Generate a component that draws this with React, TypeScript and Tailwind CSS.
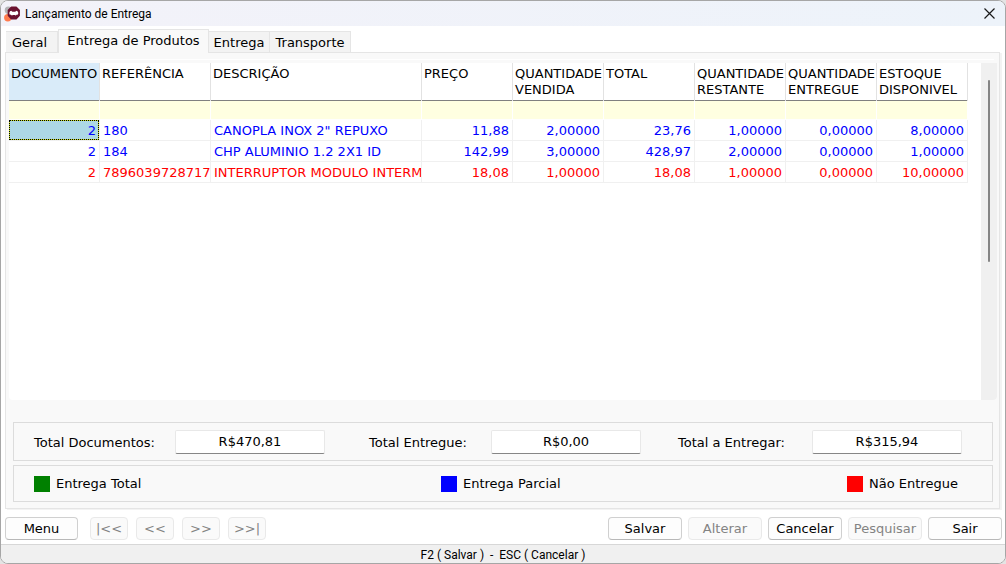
import React, { useState } from 'react';

type Status = 'parcial' | 'nenhum';

interface Produto {
  documento: string;
  referencia: string;
  descricao: string;
  valores: string[];
  status: Status;
}

const TABS = [
  { label: 'Geral', width: 'w-[52px]', align: 'text-left pl-1.5' },
  { label: 'Entrega de Produtos', width: 'w-[151px]', align: 'text-center' },
  { label: 'Entrega', width: 'w-[61px]', align: 'text-center' },
  { label: 'Transporte', width: 'w-[81px]', align: 'text-center' },
];

const COLUMNS = [
  { lines: ['DOCUMENTO'], width: 'w-[91px]' },
  { lines: ['REFERÊNCIA'], width: 'w-[111px]' },
  { lines: ['DESCRIÇÃO'], width: 'w-[211px]' },
  { lines: ['PREÇO'], width: 'w-[91px]' },
  { lines: ['QUANTIDADE', 'VENDIDA'], width: 'w-[91px]' },
  { lines: ['TOTAL'], width: 'w-[91px]' },
  { lines: ['QUANTIDADE', 'RESTANTE'], width: 'w-[91px]' },
  { lines: ['QUANTIDADE', 'ENTREGUE'], width: 'w-[91px]' },
  { lines: ['ESTOQUE', 'DISPONIVEL'], width: 'w-[91px]' },
];

const PRODUTOS: Produto[] = [
  {
    documento: '2',
    referencia: '180',
    descricao: 'CANOPLA INOX 2" REPUXO',
    valores: ['11,88', '2,00000', '23,76', '1,00000', '0,00000', '8,00000'],
    status: 'parcial',
  },
  {
    documento: '2',
    referencia: '184',
    descricao: 'CHP ALUMINIO 1.2 2X1 ID',
    valores: ['142,99', '3,00000', '428,97', '2,00000', '0,00000', '1,00000'],
    status: 'parcial',
  },
  {
    documento: '2',
    referencia: '7896039728717',
    descricao: 'INTERRUPTOR MODULO INTERM',
    valores: ['18,08', '1,00000', '18,08', '1,00000', '0,00000', '10,00000'],
    status: 'nenhum',
  },
];

const TOTAIS = [
  { id: 'total-documentos', label: 'Total Documentos:', value: 'R$470,81', width: 'w-[141px]' },
  { id: 'total-entregue', label: 'Total Entregue:', value: 'R$0,00', width: 'w-[122px]' },
  { id: 'total-entregar', label: 'Total a Entregar:', value: 'R$315,94', width: 'w-[134px]' },
];

const LEGENDA = [
  { label: 'Entrega Total', color: 'bg-[#008000]' },
  { label: 'Entrega Parcial', color: 'bg-[#0000ff]' },
  { label: 'Não Entregue', color: 'bg-[#ff0000]' },
];

const AppIcon: React.FC = () => (
  <svg className="w-4 h-4" viewBox="0 0 16 16" aria-hidden="true">
    <circle cx="4.4" cy="4.2" r="3.7" fill="#b4b4b6" />
    <circle cx="3.8" cy="11.8" r="3.7" fill="#ff7a4d" />
    <path d="M7.4 1.2 H12.2 L15.2 4.2 V9.6 L12.2 12.8 H7.4 L4.4 9.6 V4.2 Z" fill="#6b1230" stroke="#6b1230" strokeWidth="1.4" strokeLinejoin="round" />
    <path d="M5.4 6.4 Q5.8 4.8 7.2 4.8 L8.4 5.8 H11.2 L12.4 4.8 Q13.8 4.8 14.2 6.4 V7.8 Q14.2 8.8 13 8.6 Q12 10 10.6 9 H9 Q7.6 10 6.6 8.6 Q5.4 8.8 5.4 7.8 Z" fill="#fff" />
  </svg>
);

interface FooterButtonProps {
  children: React.ReactNode;
  width: string;
  disabled?: boolean;
}

const FooterButton: React.FC<FooterButtonProps> = ({ children, width, disabled }) => (
  <button
    type="button"
    disabled={disabled}
    className={`${width} h-[23px] shrink-0 rounded border text-center leading-5 whitespace-nowrap ${
      disabled
        ? 'border-[#e9e9e9] bg-[#fafafa] text-[#838383]'
        : 'border-[#d0d0d0] border-b-[#b8b8b8] bg-[#fdfdfd] text-black'
    }`}
  >
    {children}
  </button>
);

const ProductTable: React.FC = () => (
  <table className="self-start table-fixed w-[959px] border-separate border-spacing-0 whitespace-nowrap">
    <thead>
      <tr>
        {COLUMNS.map((column, i) => (
          <th
            key={i}
            scope="col"
            className={`${column.width} p-0 border-r border-[#e2e2e2] text-left font-normal align-top`}
          >
            <div className={`h-[38px] pt-[3px] pl-0.5 border-b border-[#808080] leading-4 ${i === 0 ? 'bg-[#d9ebf9]' : ''}`}>
              {column.lines.map((line) => (
                <div key={line}>{line}</div>
              ))}
            </div>
          </th>
        ))}
      </tr>
      {/* filter row */}
      <tr>
        {COLUMNS.map((_, i) => (
          <td key={i} className="h-[19px] p-0 border-r border-b border-white bg-[#ffffe1]" />
        ))}
      </tr>
    </thead>
    <tbody className="leading-[18px]">
      {PRODUTOS.map((produto, row) => (
        <tr key={row} className={produto.status === 'parcial' ? 'text-[#0000ff]' : 'text-[#ff0000]'}>
          <td className="h-[21px] p-0 border-r border-b border-[#f0f0f0] text-right">
            <div className={`pt-0.5 pr-[3px] ${row === 0 ? 'bg-[#add8e6] outline-1 outline-dotted outline-black -outline-offset-1 ring-1 ring-inset ring-[#c8e020]' : ''}`}>
              {produto.documento}
            </div>
          </td>
          <td className="p-0 pt-0.5 pl-[3px] border-r border-b border-[#f0f0f0]">{produto.referencia}</td>
          <td className="p-0 pt-0.5 pl-[3px] border-r border-b border-[#f0f0f0] overflow-hidden">{produto.descricao}</td>
          {produto.valores.map((valor, i) => (
            <td key={i} className="p-0 pt-0.5 pr-[3px] border-r border-b border-[#f0f0f0] text-right">
              {valor}
            </td>
          ))}
        </tr>
      ))}
    </tbody>
  </table>
);

const App: React.FC = () => {
  const [activeTab, setActiveTab] = useState(1);

  return (
    <div className="min-h-screen flex bg-[#e4e4e4]">
      <div className="flex-1 min-w-0 flex flex-col rounded-lg overflow-hidden border border-[#a6a6a6] bg-white text-black text-[13px] font-['DejaVu_Sans',Verdana,sans-serif]">
        <header className="h-[25px] shrink-0 flex items-center pl-[3px] pr-2.5 bg-gradient-to-r from-[#f3f2f9] to-[#edf3fa]">
          <AppIcon />
          <h1 className="flex-1 pl-[5px] text-xs font-['Roboto','Segoe_UI',sans-serif]">Lançamento de Entrega</h1>
          <button type="button" aria-label="Fechar">
            <svg className="w-[11px] h-[11px]" viewBox="0 0 11 11" fill="none" stroke="#1a1a1a" strokeWidth="1.2">
              <path d="M0.5 0.5 L10.5 10.5 M10.5 0.5 L0.5 10.5" />
            </svg>
          </button>
        </header>

        <main className="flex-1 flex flex-col pt-[3px] pl-1 pr-[3px]">
          <div role="tablist" className="flex items-end pl-px">
            {TABS.map((tab, i) => (
              <button
                key={tab.label}
                type="button"
                role="tab"
                aria-selected={i === activeTab}
                onClick={() => setActiveTab(i)}
                className={`${tab.width} ${tab.align} shrink-0 whitespace-nowrap border border-b-0 border-[#e5e5e5] leading-5 ${
                  i === activeTab ? 'relative h-6 -mb-px pb-0.5 bg-[#f9f9f9]' : 'h-[21px] pt-px bg-[#f3f3f3] border-l-0'
                }`}
              >
                {tab.label}
              </button>
            ))}
          </div>

          <section role="tabpanel" className="flex-1 flex flex-col mr-0.5 border border-[#e5e5e5] bg-[#f9f9f9] shadow-[2px_1px_0_#f3f3f3] pl-[3px] pr-0.5 pt-1.5 pb-1.5">
            <div className="h-px mx-[3px] mb-[3px] bg-white" />
            <div className="flex-1 flex justify-between rounded-b overflow-hidden bg-white">
              <ProductTable />
              <div className="w-4 shrink-0 bg-[#f0f0f0] pt-[17px]">
                <div className="w-0.5 h-[182px] mx-auto rounded-full bg-[#858585]" />
              </div>
            </div>

            <div className="mt-[22px] mx-1 h-[39px] grid grid-cols-[335fr_309fr_314fr] items-center pl-5 border border-[#dcdcdc]">
              {TOTAIS.map((total) => (
                <div key={total.id} className="flex items-center whitespace-nowrap">
                  <label htmlFor={total.id} className={`${total.width} pt-0.5`}>{total.label}</label>
                  <input
                    id={total.id}
                    readOnly
                    defaultValue={total.value}
                    className="w-[150px] h-6 bg-white border border-[#e8e8e8] border-b-[#868686] rounded-xs text-center outline-none"
                  />
                </div>
              ))}
            </div>

            <div className="mt-1 mx-1 h-[37px] grid grid-cols-[407fr_406fr_145fr] items-center pl-5 border border-[#dcdcdc]">
              {LEGENDA.map((item) => (
                <div key={item.label} className="flex items-center gap-1.5 whitespace-nowrap">
                  <span className={`w-4 h-4 ${item.color}`} />
                  <span>{item.label}</span>
                </div>
              ))}
            </div>
          </section>

          <div className="flex justify-between pt-2 pb-1">
            <div className="flex gap-2">
              <FooterButton width="w-[73px] mr-1">Menu</FooterButton>
              <FooterButton width="w-[38px]" disabled>|&lt;&lt;</FooterButton>
              <FooterButton width="w-[38px]" disabled>&lt;&lt;</FooterButton>
              <FooterButton width="w-[38px]" disabled>&gt;&gt;</FooterButton>
              <FooterButton width="w-[38px]" disabled>&gt;&gt;|</FooterButton>
            </div>
            <div className="flex gap-1.5">
              <FooterButton width="w-[74px]">Salvar</FooterButton>
              <FooterButton width="w-[74px]" disabled>Alterar</FooterButton>
              <FooterButton width="w-[74px]">Cancelar</FooterButton>
              <FooterButton width="w-[74px]" disabled>Pesquisar</FooterButton>
              <FooterButton width="w-[74px]">Sair</FooterButton>
            </div>
          </div>
        </main>

        <footer className="h-[19px] shrink-0 border-t border-[#d7d7d7] bg-[#f0f0f0] text-center text-xs leading-5 whitespace-pre font-['Roboto','Segoe_UI',sans-serif]">
          {'F2 ( Salvar )  -  ESC ( Cancelar )'}
        </footer>
      </div>
    </div>
  );
};

export default App;
